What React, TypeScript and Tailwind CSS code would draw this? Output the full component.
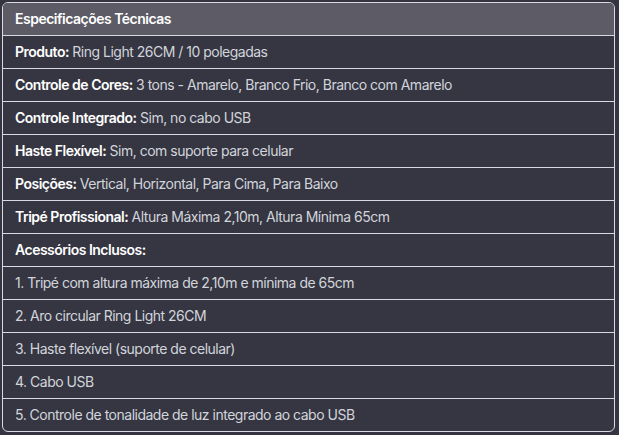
import React from 'react';

const specs: { label: string; value: string }[] = [
  { label: 'Produto:', value: 'Ring Light 26CM / 10 polegadas' },
  { label: 'Controle de Cores:', value: '3 tons - Amarelo, Branco Frio, Branco com Amarelo' },
  { label: 'Controle Integrado:', value: 'Sim, no cabo USB' },
  { label: 'Haste Flexível:', value: 'Sim, com suporte para celular' },
  { label: 'Posições:', value: 'Vertical, Horizontal, Para Cima, Para Baixo' },
  { label: 'Tripé Profissional:', value: 'Altura Máxima 2,10m, Altura Mínima 65cm' },
];

const accessories = [
  '1. Tripé com altura máxima de 2,10m e mínima de 65cm',
  '2. Aro circular Ring Light 26CM',
  '3. Haste flexível (suporte de celular)',
  '4. Cabo USB',
  '5. Controle de tonalidade de luz integrado ao cabo USB',
];

export default function App() {
  return (
    <div className="min-h-[435px] bg-[#343541] p-[2px] font-['Inter',sans-serif] text-[14px] leading-[20px] tracking-[-0.5px]">
      <div className="w-[613px] overflow-hidden rounded-md border border-[#d9d9e3] bg-[#363642]">
        <div className="border-b border-[#d9d9e3] bg-[#5c5b66] px-3 py-[6px] font-semibold text-white">
          Especificações Técnicas
        </div>
        {specs.map((s) => (
          <div key={s.label} className="border-b border-[#d9d9e3] px-3 py-[6px] text-[#d1d5db]">
            <span className="font-semibold text-white">{s.label}</span> {s.value}
          </div>
        ))}
        <div className="border-b border-[#d9d9e3] px-3 py-[6px] font-semibold text-white">
          Acessórios Inclusos:
        </div>
        {accessories.map((a, i) => (
          <div
            key={a}
            className={`px-3 py-[6px] text-[#d1d5db] ${i < accessories.length - 1 ? 'border-b border-[#d9d9e3]' : ''}`}
          >
            {a}
          </div>
        ))}
      </div>
    </div>
  );
}
